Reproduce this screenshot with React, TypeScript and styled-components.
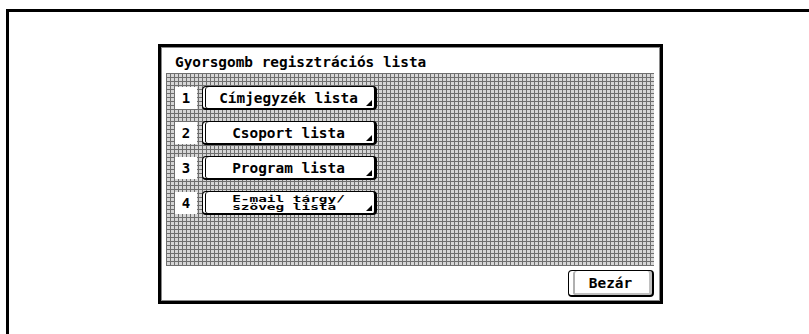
import React from 'react';
import styled, { createGlobalStyle } from 'styled-components';

const GlobalStyle = createGlobalStyle`
  html, body {
    margin: 0;
    padding: 0;
    background: #fff;
    overflow: hidden;
  }
  body {
    font-family: "DejaVu Sans Mono", "Liberation Mono", monospace;
    color: #000;
  }
`;

const Screen = styled.div`
  width: 809px;
  height: 334px;
  overflow: hidden;
  box-sizing: border-box;
  padding: 9px 0 0 6px;
`;

// outer frame only shows its top and left edges, the rest runs off screen
const Frame = styled.div`
  width: 900px;
  height: 400px;
  box-sizing: border-box;
  border-top: 3px solid #000;
  border-left: 3px solid #000;
  padding: 32px 0 0 149px;
`;

const Panel = styled.div`
  position: relative;
  width: 505px;
  height: 260px;
  box-sizing: border-box;
  border: 3px solid #000;
  background: #fff;
  box-shadow: inset 1px 1px 0 #8a8a8a, inset -1px -1px 0 #8a8a8a;
  display: flex;
  flex-direction: column;

  &::after {
    content: '';
    position: absolute;
    top: -3px;
    right: -3px;
    border-top: 5px solid #000;
    border-left: 5px solid transparent;
  }
`;

const Title = styled.div`
  height: 26px;
  box-sizing: border-box;
  padding: 5px 0 0 14px;
  font-size: 14.4px;
  font-weight: bold;
  line-height: 20px;
  white-space: nowrap;
`;

const Pattern = styled.div`
  height: 193px;
  margin: 0 6px 0 5px;
  box-sizing: border-box;
  padding: 13px 0 0 9px;
  display: flex;
  flex-direction: column;
  gap: 11px;
  background-color: #d6d6d6;
  background-image:
    repeating-linear-gradient(90deg, #6e6e6e 0 1px, transparent 1px 4px),
    repeating-linear-gradient(0deg, #6e6e6e 0 1px, transparent 1px 4px);
`;

const Row = styled.div`
  display: flex;
  align-items: center;
  gap: 5px;
  height: 24px;
`;

const NumBox = styled.div`
  width: 22px;
  height: 22px;
  background: #fff;
  display: flex;
  align-items: center;
  justify-content: center;
  font-size: 14px;
  font-weight: bold;
`;

const MenuButton = styled.div`
  position: relative;
  width: 175px;
  height: 24px;
  box-sizing: border-box;
  background: #fff;
  border: 1px solid #000;
  border-right-width: 3px;
  border-bottom-width: 2px;
  border-radius: 4px;
  box-shadow: inset 2px 0 0 #fff, inset 3px 0 0 #000;
  display: flex;
  align-items: center;
  justify-content: center;
  font-size: 14.4px;
  font-weight: bold;
  white-space: nowrap;

  &::after {
    content: '';
    position: absolute;
    right: 2px;
    bottom: 2px;
    border-bottom: 6px solid #000;
    border-left: 6px solid transparent;
  }
`;

const TwoLine = styled.span`
  display: block;
  text-align: left;
  line-height: 12px;
  transform: scaleY(0.66);
`;

const Footer = styled.div`
  flex: 1;
  display: flex;
  align-items: center;
  justify-content: flex-end;
  padding-right: 6px;
`;

const CloseButton = styled.div`
  width: 86px;
  height: 27px;
  box-sizing: border-box;
  background: #fff;
  border: 1px solid #000;
  border-right-width: 2px;
  border-bottom-width: 2px;
  border-radius: 4px;
  box-shadow: inset 4px 0 0 #fff, inset 6px 0 0 #b0b0b0, inset -3px 0 0 #c0c0c0, inset 0 -2px 0 #c0c0c0;
  display: flex;
  align-items: center;
  justify-content: center;
  font-size: 14.4px;
  font-weight: bold;
`;

const items = [
  { num: '1', label: ['Címjegyzék lista'] },
  { num: '2', label: ['Csoport lista'] },
  { num: '3', label: ['Program lista'] },
  { num: '4', label: ['E-mail tárgy/', 'szöveg lista'] },
];

const App = () => (
  <Screen>
    <GlobalStyle />
    <Frame>
      <Panel>
        <Title>Gyorsgomb regisztrációs lista</Title>
        <Pattern>
          {items.map(item => (
            <Row key={item.num}>
              <NumBox>{item.num}</NumBox>
              <MenuButton>
                {item.label.length > 1 ? (
                  <TwoLine>
                    {item.label.map(line => <div key={line}>{line}</div>)}
                  </TwoLine>
                ) : item.label[0]}
              </MenuButton>
            </Row>
          ))}
        </Pattern>
        <Footer>
          <CloseButton>Bezár</CloseButton>
        </Footer>
      </Panel>
    </Frame>
  </Screen>
);

export default App;
